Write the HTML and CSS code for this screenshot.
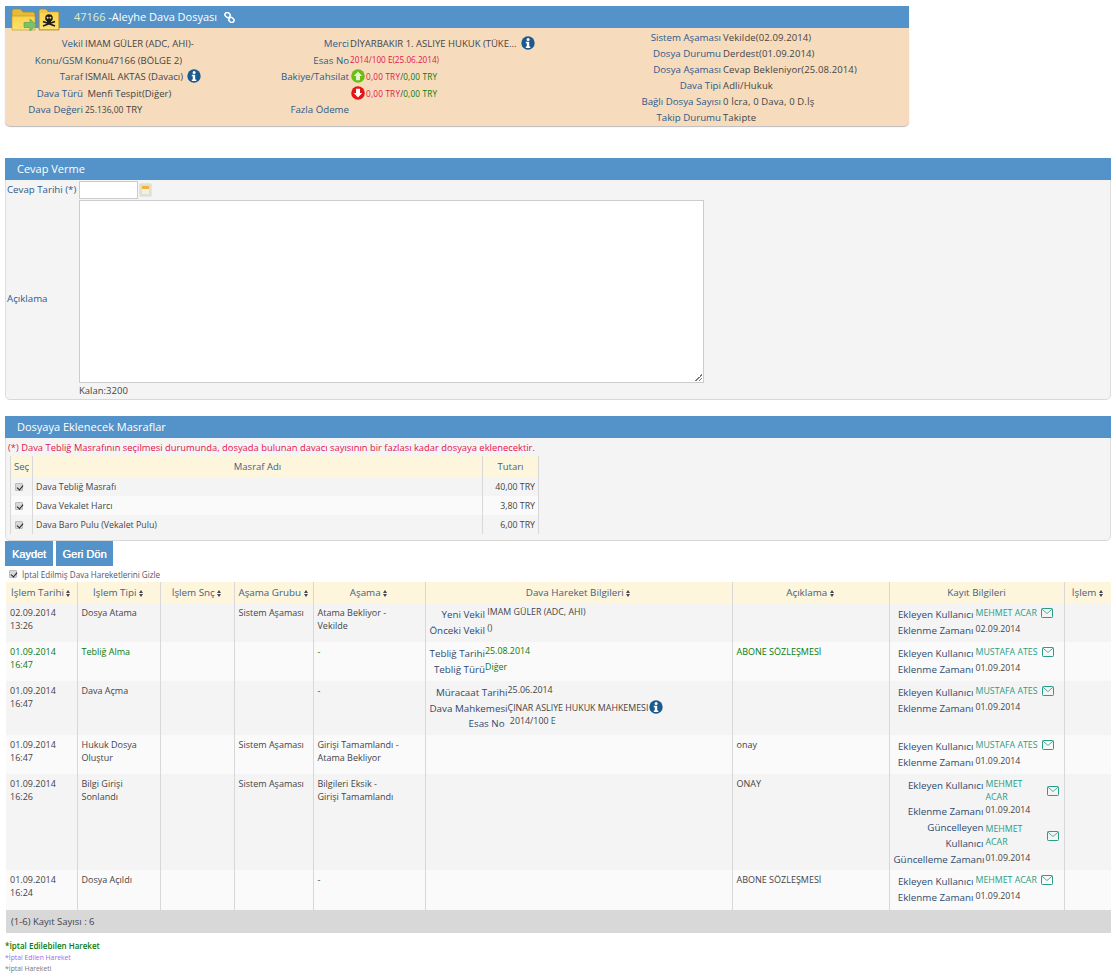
FILE: index.html
```html
<!DOCTYPE html>
<html lang="tr">
<head>
<meta charset="utf-8">
<title>Dava Dosyası</title>
<link rel="stylesheet" href="styles.css">
</head>
<body>
<svg class="defs" width="0" height="0" aria-hidden="true">
  <symbol id="info" viewBox="0 0 14 14">
    <circle cx="7" cy="7" r="6.7" fill="#1b5a8e"/>
    <circle cx="7.1" cy="3.4" r="1.5" fill="#fff"/>
    <path d="M4.8 5.700h3.400v4.700h1.100v1.500H4.800v-1.500h1V7.200h-1z" fill="#fff"/>
  </symbol>
  <symbol id="mail" viewBox="0 0 12 10">
    <rect x=".5" y=".5" width="11" height="9" rx=".8" fill="none" stroke="#2a9d84"/>
    <path d="M1 1.200l5 4.300 5-4.300" fill="none" stroke="#2a9d84" stroke-width=".8"/>
  </symbol>
  <linearGradient id="fold" x1="0" y1="0" x2="0" y2="1"><stop offset="0" stop-color="#fbd24a"/><stop offset="1" stop-color="#fde26e"/></linearGradient>
</svg>

<section class="panel panel-top">
  <header class="bar bar-top">
    <span class="folders">
      <svg class="folder-a" viewBox="0 0 26 24" width="26" height="24"><path d="M1 4.500C1 3 2 2 3.500 2h6l2.500 3h9.500C23 5 24 6 24 7.500V21H1z" fill="#e9b93a" stroke="#a88a2c" stroke-width=".8"/><path d="M1 9h23v14H1z" fill="url(#fold)" stroke="#b3962f" stroke-width=".6"/><path d="M13 15.500h6V12l6.500 6-6.500 6v-3.500h-6z" fill="#7ac16b" stroke="#4c9a55" stroke-width=".6"/></svg>
      <svg class="folder-b" viewBox="0 0 22 24" width="22" height="24"><path d="M1 4C1 3 2 2 3 2h5l2 2.500h9c1.200 0 2 .8 2 2V23H1z" fill="#f0c445" stroke="#a88a2c" stroke-width=".8"/><path d="M2 6h18v16H2z" fill="url(#fold)"/><circle cx="11" cy="11" r="3.800" fill="#1c1c1c"/><rect x="9" y="13.500" width="4" height="2.500" fill="#1c1c1c"/><path d="M5 14.500l12 4.500M17 14.500L5 19" stroke="#1c1c1c" stroke-width="1.700"/><circle cx="9.600" cy="10.800" r="1" fill="#f8dc6c"/><circle cx="12.400" cy="10.800" r="1" fill="#f8dc6c"/></svg>
    </span>
    <span class="bar-title"><span class="file-no">47166</span> -Aleyhe Dava Dosyası</span>
    <svg class="link-ico" viewBox="0 0 12 12" width="11" height="11"><g fill="none" stroke="#fff" stroke-width="1.700"><rect x=".9" y=".9" width="6" height="4.800" rx="2.400" transform="rotate(42 3.900 3.300)"/><rect x="5.100" y="6.300" width="6" height="4.800" rx="2.400" transform="rotate(42 8.100 8.700)"/></g></svg>
  </header>
  <div class="info">
    <div class="info-col col-a">
      <div class="kv"><span class="k">Vekil</span><span class="v">IMAM GÜLER (ADC, AHI)-</span></div>
      <div class="kv"><span class="k">Konu/GSM</span><span class="v">Konu47166 (BÖLGE 2)</span></div>
      <div class="kv"><span class="k">Taraf</span><span class="v">ISMAIL AKTAS (Davacı) <svg class="info-ico"><use href="#info"/></svg></span></div>
      <div class="kv"><span class="k">Dava Türü</span><span class="v">&nbsp;Menfi Tespit(Diğer)</span></div>
      <div class="kv"><span class="k">Dava Değeri</span><span class="v"><small>25.136,00</small> TRY</span></div>
    </div>
    <div class="info-col col-b">
      <div class="kv"><span class="k">Merci</span><span class="v">DİYARBAKIR 1. ASLIYE HUKUK (TÜKE... <svg class="info-ico"><use href="#info"/></svg></span></div>
      <div class="kv"><span class="k">Esas No</span><span class="v pink tiny raised">2014/100 E(25.06.2014)</span></div>
      <div class="kv"><span class="k">Bakiye/Tahsilat</span><span class="v tiny"><svg class="arrow" viewBox="0 0 14 14"><circle cx="7" cy="7" r="6.800" fill="#69bd14"/><path d="M7 2.600L11.200 7H9v4.200H5V7H2.800z" fill="#e4f5d0"/></svg><span class="pink">0,00 TRY</span>/<span class="green">0,00 TRY</span></span></div>
      <div class="kv"><span class="k"></span><span class="v tiny"><svg class="arrow" viewBox="0 0 14 14"><circle cx="7" cy="7" r="6.800" fill="#e61414"/><path d="M7 11.400L11.200 7H9V2.800H5V7H2.800z" fill="#fff"/></svg><span class="pink">0,00 TRY</span>/<span class="green">0,00 TRY</span></span></div>
      <div class="kv"><span class="k">Fazla Ödeme</span><span class="v"></span></div>
    </div>
    <div class="info-col col-c">
      <div class="kv"><span class="k">Sistem Aşaması</span><span class="v">Vekilde(02.09.2014)</span></div>
      <div class="kv"><span class="k">Dosya Durumu</span><span class="v">Derdest(01.09.2014)</span></div>
      <div class="kv"><span class="k">Dosya Aşaması</span><span class="v">Cevap Bekleniyor(25.08.2014)</span></div>
      <div class="kv"><span class="k">Dava Tipi</span><span class="v">Adli/Hukuk</span></div>
      <div class="kv"><span class="k">Bağlı Dosya Sayısı</span><span class="v">0 İcra, 0 Dava, 0 D.İş</span></div>
      <div class="kv"><span class="k">Takip Durumu</span><span class="v">Takipte</span></div>
    </div>
  </div>
</section>

<section class="panel panel-reply">
  <header class="bar">Cevap Verme</header>
  <div class="reply-body">
    <div class="form-row date-row">
      <label class="form-label">Cevap Tarihi (*)</label>
      <input class="date-input" type="text">
      <span class="cal"><span class="cal-top"></span><span class="cal-page"></span></span>
    </div>
    <div class="form-row note-row">
      <label class="form-label note-label">Açıklama</label>
      <div class="note-box"></div>
    </div>
    <div class="remain">Kalan:3200</div>
  </div>
</section>

<section class="panel panel-cost">
  <header class="bar">Dosyaya Eklenecek Masraflar</header>
  <div class="cost-body">
    <p class="warn">(*) Dava Tebliğ Masrafının seçilmesi durumunda, dosyada bulunan davacı sayısının bir fazlası kadar dosyaya eklenecektir.</p>
    <table class="cost-table">
      <thead><tr><th class="c-sel">Seç</th><th class="c-name">Masraf Adı</th><th class="c-amt">Tutarı</th></tr></thead>
      <tbody>
        <tr class="odd"><td class="center"><span class="cb"></span></td><td>Dava Tebliğ Masrafı</td><td class="right">40,00 TRY</td></tr>
        <tr class="even"><td class="center"><span class="cb"></span></td><td>Dava Vekalet Harcı</td><td class="right">3,80 TRY</td></tr>
        <tr class="odd"><td class="center"><span class="cb"></span></td><td>Dava Baro Pulu (Vekalet Pulu)</td><td class="right">6,00 TRY</td></tr>
      </tbody>
    </table>
  </div>
</section>

<div class="actions"><button class="btn">Kaydet</button><button class="btn btn-back">Geri Dön</button></div>
<div class="hide-row"><span class="cb cb-small"></span><span>İptal Edilmiş Dava Hareketlerini Gizle</span></div>

<table class="moves">
  <colgroup><col class="w1"><col class="w2"><col class="w3"><col class="w4"><col class="w5"><col class="w6"><col class="w7"><col class="w8"><col class="w9"></colgroup>
  <thead>
    <tr>
      <th>İşlem Tarihi <i class="sort"></i></th><th>İşlem Tipi <i class="sort"></i></th><th>İşlem Snç <i class="sort"></i></th><th>Aşama Grubu <i class="sort"></i></th><th>Aşama <i class="sort"></i></th><th>Dava Hareket Bilgileri <i class="sort"></i></th><th>Açıklama <i class="sort"></i></th><th>Kayıt Bilgileri</th><th>İşlem <i class="sort"></i></th>
    </tr>
  </thead>
  <tbody>
    <tr class="odd r39">
      <td>02.09.2014 13:26</td><td>Dosya Atama</td><td></td><td>Sistem Aşaması</td><td>Atama Bekliyor -<br>Vekilde</td>
      <td><div class="det"><span class="dk">Yeni Vekil</span><span class="dv">&nbsp;IMAM GÜLER (ADC, AHI)</span><span class="dk">Önceki Vekil</span><span class="dv">&nbsp;()</span></div></td>
      <td></td>
      <td><div class="rec"><span class="dk">Ekleyen Kullanıcı</span><span class="rv"><span class="teal">MEHMET ACAR</span><svg class="mail"><use href="#mail"/></svg></span><span class="dk">Eklenme Zamanı</span><span class="rv">02.09.2014</span></div></td>
      <td></td>
    </tr>
    <tr class="even r39 active">
      <td>01.09.2014 16:47</td><td>Tebliğ Alma</td><td></td><td></td><td>-</td>
      <td><div class="det"><span class="dk">Tebliğ Tarihi</span><span class="dv">25.08.2014</span><span class="dk">Tebliğ Türü</span><span class="dv">Diğer</span></div></td>
      <td>ABONE SÖZLEŞMESİ</td>
      <td><div class="rec"><span class="dk">Ekleyen Kullanıcı</span><span class="rv"><span class="teal">MUSTAFA ATES</span><svg class="mail"><use href="#mail"/></svg></span><span class="dk">Eklenme Zamanı</span><span class="rv date-plain">01.09.2014</span></div></td>
      <td></td>
    </tr>
    <tr class="odd r54">
      <td>01.09.2014 16:47</td><td>Dava Açma</td><td></td><td></td><td>-</td>
      <td><div class="det"><span class="dk">Müracaat Tarihi</span><span class="dv">25.06.2014</span><span class="dk">Dava Mahkemesi</span><span class="dv">ÇINAR ASLIYE HUKUK MAHKEMESI<svg class="info-ico det-ico"><use href="#info"/></svg></span><span class="dk esas">Esas No</span><span class="dv">&nbsp;2014/100 <span class="navy">E</span></span></div></td>
      <td></td>
      <td><div class="rec"><span class="dk">Ekleyen Kullanıcı</span><span class="rv"><span class="teal">MUSTAFA ATES</span><svg class="mail"><use href="#mail"/></svg></span><span class="dk">Eklenme Zamanı</span><span class="rv">01.09.2014</span></div></td>
      <td></td>
    </tr>
    <tr class="even r39">
      <td>01.09.2014 16:47</td><td>Hukuk Dosya Oluştur</td><td></td><td>Sistem Aşaması</td><td>Girişi Tamamlandı -<br>Atama Bekliyor</td>
      <td></td>
      <td>onay</td>
      <td><div class="rec"><span class="dk">Ekleyen Kullanıcı</span><span class="rv"><span class="teal">MUSTAFA ATES</span><svg class="mail"><use href="#mail"/></svg></span><span class="dk">Eklenme Zamanı</span><span class="rv">01.09.2014</span></div></td>
      <td></td>
    </tr>
    <tr class="odd r96">
      <td>01.09.2014 16:26</td><td>Bilgi Girişi Sonlandı</td><td></td><td>Sistem Aşaması</td><td>Bilgileri Eksik -<br>Girişi Tamamlandı</td>
      <td></td>
      <td>ONAY</td>
      <td><div class="rec rec-wide">
        <span class="dk">Ekleyen Kullanıcı</span><span class="rv rv-wrap"><span class="teal">MEHMET<br>ACAR</span><svg class="mail"><use href="#mail"/></svg></span>
        <span class="dk">Eklenme Zamanı</span><span class="rv">01.09.2014</span>
        <span class="dk">Güncelleyen<br>Kullanıcı</span><span class="rv rv-wrap"><span class="teal">MEHMET<br>ACAR</span><svg class="mail"><use href="#mail"/></svg></span>
        <span class="dk">Güncelleme Zamanı</span><span class="rv">01.09.2014</span>
      </div></td>
      <td></td>
    </tr>
    <tr class="even r40">
      <td>01.09.2014 16:24</td><td>Dosya Açıldı</td><td></td><td></td><td>-</td>
      <td></td>
      <td>ABONE SÖZLEŞMESİ</td>
      <td><div class="rec"><span class="dk">Ekleyen Kullanıcı</span><span class="rv"><span class="teal">MEHMET ACAR</span><svg class="mail"><use href="#mail"/></svg></span><span class="dk">Eklenme Zamanı</span><span class="rv">01.09.2014</span></div></td>
      <td></td>
    </tr>
  </tbody>
  <tfoot><tr><td colspan="9">(1-6) Kayıt Sayısı : 6</td></tr></tfoot>
</table>

<div class="legend">
  <div class="lg-a">*İptal Edilebilen Hareket</div>
  <div class="lg-b">*İptal Edilen Hareket</div>
  <div class="lg-c">*İptal Hareketi</div>
</div>
</body>
</html>
```
FILE: styles.css
```css
* { box-sizing: border-box; }
html, body { margin: 0; padding: 0; }
body {
  width: 1116px;
  height: 979px;
  overflow: hidden;
  background: #fff;
  font-family: "Open Sans", "Noto Sans", sans-serif;
  font-size: 9px;
  color: #444;
  padding: 6px 5px 0;
}
.defs { position: absolute; }

.panel { border-radius: 0 0 5px 5px; }
.bar {
  height: 22px;
  background: #5493c9;
  color: #fff;
  font-size: 11px;
  font-weight: 500;
  line-height: 22px;
  padding-left: 12px;
}
.panel-top { width: 904px; height: 120px; background: #f6dcbd; box-shadow: 0 1px 1px #bbb; }
.bar-top { display: flex; align-items: center; padding: 0; }
.folders { display: flex; width: 69px; height: 22px; padding: 1px 0 0 6px; gap: 1px; align-items: flex-start; }
.folders svg { flex: none; }
.bar-title { white-space: nowrap; }
.file-no { color: #dff0c8; }
.link-ico { margin-left: 7px; }

.info { display: flex; font-size: 9.500px; color: #444; }
.info-col { display: flex; flex-direction: column; }
.col-a { width: 260px; padding-top: 8px; }
.col-a .k { width: 78px; }
.col-b { width: 368px; padding-top: 8px; }
.col-b .k { width: 84px; }
.col-b .v { margin-left: -1px; }
.col-c { padding-top: 2px; }
.col-c .k { width: 88px; }
.col-c .v { letter-spacing: .12px; }
.kv { display: flex; height: 16.500px; line-height: 16px; white-space: nowrap; }
.col-c .kv { height: 16px; }
.k { text-align: right; color: #2e5a8a; flex: none; margin-right: 2px; font-size: 9.700px; white-space: nowrap; }
.v { flex: none; }
.v small { font-size: 8.500px; }
.raised { line-height: 13px; }
.info-ico { width: 14px; height: 14px; vertical-align: -3px; margin-left: 2px; }
.arrow { width: 14px; height: 14px; vertical-align: -3px; margin: 0 1px 0 1px; }
.arrow ~ span { letter-spacing: .22px; }
.pink { color: #e6124c; }
.green { color: #0a7a0a; }
.tiny { font-size: 8.200px; }
.navy { color: #2e5a8a; }

.panel-reply { width: 1106px; height: 242px; margin-top: 32px; background: #f4f4f4; border-bottom: 1px solid #d8d8d8; border-left: 1px solid #ddd; border-right: 1px solid #ddd; }
.panel-reply .bar, .panel-cost .bar { margin: 0 -1px; }
.reply-body { display: flex; flex-direction: column; }
.form-row { display: flex; }
.form-label { width: 73px; padding-left: 1px; color: #2e5a8a; font-size: 9.700px; flex: none; white-space: nowrap; }
.date-row { height: 20px; align-items: center; }
.date-row .form-label { padding-bottom: 2px; }
.date-input { width: 59px; height: 18px; border: 1px solid #ccc; background: #fff; padding: 0; margin: 0; }
.cal { width: 13px; height: 14px; margin-left: 1px; background: #dfdfd8; border: 1px solid #e4e4e0; border-radius: 2px; display: flex; flex-direction: column; padding: 2px 2px 2px; }
.cal-top { height: 3px; background: #f0b23a; }
.cal-page { flex: 1; background: #f4f0dc; }
.note-row { align-items: center; height: 183px; }
.note-label { padding-top: 14px; }
.note-box { width: 625px; height: 183px; border: 1px solid #ccc; background: #fff; position: relative; }
.note-box::after { content: ""; position: absolute; right: 1px; bottom: 1px; width: 7px; height: 7px; background: linear-gradient(135deg, transparent 50%, #777 50%, #777 58%, transparent 58%, transparent 72%, #777 72%, #777 80%, transparent 80%); }
.remain { padding: 1px 0 0 73px; color: #444; font-size: 9.500px; }

.panel-cost { width: 1106px; height: 125px; margin-top: 16px; background: #f4f4f4; border-bottom: 1px solid #d8d8d8; border-left: 1px solid #ddd; border-right: 1px solid #ddd; }
.warn { margin: 0; height: 18px; line-height: 19px; padding-left: 2px; color: #e6124c; font-size: 9.400px; white-space: nowrap; }
.cost-table { border-collapse: collapse; table-layout: fixed; width: 529px; margin-left: 4px; }
.cost-table th { height: 21px; background: #fdf5dc; color: #44617f; font-weight: 400; font-size: 9.500px; text-align: center; border-left: 1px solid #d8d8d8; padding: 0; }
.cost-table th:last-child, .cost-table td:last-child { border-right: 1px solid #d8d8d8; }
.c-sel { width: 22px; }
.c-amt { width: 56px; }
.cost-table td { height: 19px; padding: 0 3px; font-size: 8.800px; border-left: 1px solid #d8d8d8; white-space: nowrap; }
.cost-table tr.odd td { background: #f4f4f4; }
.cost-table tr.even td { background: #fafafa; }
.center { text-align: center; }
.right { text-align: right; }
.cost-table td.center { padding: 0 5px 0 0; }
.cb { display: inline-block; width: 8px; height: 8px; background: #d8d8d8; border: 1px solid #bbb; border-radius: 1px; position: relative; vertical-align: middle; }
.cb::after { content: ""; position: absolute; left: 1.500px; top: -.5px; width: 3px; height: 5px; border: solid #222; border-width: 0 1.500px 1.500px 0; transform: rotate(40deg); }

.actions { display: flex; gap: 3px; height: 25px; }
.btn { border: 0; height: 25px; padding: 0; background: #5493c9; color: #fff; font-family: "Liberation Sans", sans-serif; font-size: 11px; font-weight: 400; text-shadow: .3px 0 0 #fff; width: 48px; }
.btn-back { width: 57px; }
.hide-row { display: flex; align-items: center; gap: 5px; height: 16px; padding-left: 4px; font-size: 8.100px; color: #556; }

.moves { border-collapse: collapse; table-layout: fixed; width: 1105px; margin: 0 0 0 1px; font-size: 9px; }
.w1 { width: 71px; } .w2 { width: 83px; } .w3 { width: 74px; } .w4 { width: 79px; } .w5 { width: 112px; } .w6 { width: 307px; } .w7 { width: 157px; } .w8 { width: 175px; } .w9 { width: 47px; }
.moves th { height: 21px; background: #fdf5dc; color: #44617f; font-weight: 400; font-size: 9.800px; text-align: center; padding: 0; border-left: 1px solid #d8d8d8; white-space: nowrap; }
.moves th:first-child { border-left: 0; }
.sort { display: inline-block; width: 5px; height: 7px; vertical-align: -1px; position: relative; }
.sort::before, .sort::after { content: ""; position: absolute; left: 0; border-left: 2.500px solid transparent; border-right: 2.500px solid transparent; }
.sort::before { top: 0; border-bottom: 3px solid #445; }
.sort::after { bottom: 0; border-top: 3px solid #445; }
.moves td { padding: 3px 4px 0; vertical-align: top; line-height: 13px; border-left: 1px solid #d8d8d8; color: #444; }
.moves td:first-child { border-left: 0; }
.moves tr.odd td { background: #f4f4f4; }
.moves tr.even td { background: #fafafa; }
.r39 { height: 39px; }
.r40 { height: 40px; }
.r54 { height: 54px; }
.r96 { height: 96px; }
.moves tr.active td, .moves tr.active .dv { color: #0a7a0a; }
.moves tr.active .date-plain { color: #444; }
.moves tr.active .dk { color: #2e4a70; }
.moves tfoot td { height: 23px; background: #d8d8d8; color: #444; font-size: 9.500px; padding: 0 0 0 5px; line-height: 23px; border: 0; }

.det { display: grid; grid-template-columns: max-content max-content; grid-auto-rows: 15.500px; white-space: nowrap; }
.dk { text-align: right; color: #2e4a70; font-size: 9.800px; line-height: 17px; }
.esas { padding-right: 3px; }
.dv { font-size: 8.850px; line-height: 13px; }
.det-ico { margin-left: 1px; }
.rec { display: grid; grid-template-columns: 80px 1fr; padding-top: 1px; font-size: 8.800px; }
.rec .dk { line-height: 16px; }
.rec-wide { grid-template-columns: 90px 1fr; }
.rec-wide .rv-wrap { display: flex; justify-content: space-between; align-items: center; padding-right: 1px; }
.rec-wide .dk { white-space: nowrap; }
.rv { padding-left: 2px; font-size: 8.800px; line-height: 13px; white-space: nowrap; min-height: 16px; }
.teal { color: #2a9d84; }
.mail { width: 12px; height: 10px; margin-left: 4px; vertical-align: -2px; }

.legend { padding: 7px 0 0; line-height: 11.500px; }
.lg-a { font-size: 8px; font-weight: 600; color: #0a7a0a; }
.lg-b { font-size: 6.800px; color: #9a6cf0; }
.lg-c { font-size: 6.800px; color: #777; }
```
